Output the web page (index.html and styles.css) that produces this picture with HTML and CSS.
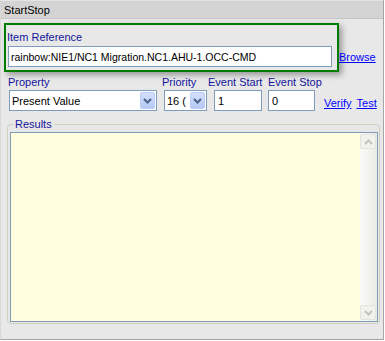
FILE: index.html
```html
<!DOCTYPE html>
<html>
<head lang="en">
    <meta charset="UTF-8">
    <title>StartStop</title>

    <link rel="stylesheet" href="styles.css">
</head>
<body>

<div class="panel">
    <div class="titlebar">StartStop</div>

    <div class="content">
        <div class="ref-row">
            <div class="ref-box">
                <div class="label">Item Reference</div>
                <input class="text ref-input" type="text" value="rainbow:NIE1/NC1 Migration.NC1.AHU-1.OCC-CMD">
            </div>
            <a class="link browse" href="#">Browse</a>
        </div>

        <div class="fields">
            <div class="field f-property">
                <div class="label">Property</div>
                <div class="combo combo-property">
                    <span class="combo-text">Present Value</span>
                    <span class="combo-btn">
                        <svg width="9" height="6" viewBox="0 0 9 6"><path d="M1 1 L4.5 4.5 L8 1" fill="none" stroke="#4d6185" stroke-width="2"/></svg>
                    </span>
                </div>
            </div>
            <div class="field f-priority">
                <div class="label">Priority</div>
                <div class="combo combo-priority">
                    <span class="combo-text">16 (</span>
                    <span class="combo-btn">
                        <svg width="9" height="6" viewBox="0 0 9 6"><path d="M1 1 L4.5 4.5 L8 1" fill="none" stroke="#4d6185" stroke-width="2"/></svg>
                    </span>
                </div>
            </div>
            <div class="field f-start">
                <div class="label">Event Start</div>
                <input class="text small-input" type="text" value="1">
            </div>
            <div class="field f-stop">
                <div class="label">Event Stop</div>
                <input class="text small-input" type="text" value="0">
            </div>
            <div class="links">
                <a class="link" href="#">Verify</a>
                <a class="link" href="#">Test</a>
            </div>
        </div>

        <fieldset class="results">
            <legend>Results</legend>
            <div class="results-area">
                <div class="results-text"></div>
                <div class="scrollbar">
                    <div class="sb-btn">
                        <svg width="9" height="6" viewBox="0 0 9 6"><path d="M1 5 L4.5 1.5 L8 5" fill="none" stroke="#c4c4bc" stroke-width="2"/></svg>
                    </div>
                    <div class="sb-track"></div>
                    <div class="sb-btn">
                        <svg width="9" height="6" viewBox="0 0 9 6"><path d="M1 1 L4.5 4.5 L8 1" fill="none" stroke="#c4c4bc" stroke-width="2"/></svg>
                    </div>
                </div>
            </div>
        </fieldset>
    </div>
</div>

</body>
</html>
```

FILE: styles.css
```css
body, html {
    padding: 0;
    margin: 0;
    background: #ffffff;
}

body {
    font-family: "Liberation Sans", Arial, sans-serif;
    font-size: 11px;
}

.panel {
    width: 384px;
    height: 340px;
    box-sizing: border-box;
    background: #e8e8e8;
    border-right: 1px solid #a6a6a6;
    border-bottom: 1px solid #a6a6a6;
    border-left: 1px solid #d8d8d8;
    display: flex;
    flex-direction: column;
}

.titlebar {
    height: 19px;
    line-height: 19px;
    padding-left: 3px;
    background: #d4d4d4;
    border-top: 1px solid #e4e4e4;
    border-bottom: 1px solid #c6c6c6;
    box-sizing: border-box;
    color: #000;
    font-size: 11px;
}

.content {
    flex: 1;
    display: flex;
    flex-direction: column;
}

.label {
    color: #14149a;
    line-height: 14px;
    height: 14px;
    white-space: nowrap;
}

.link {
    color: #0000ff;
    text-decoration: underline;
}

/* item reference */

.ref-row {
    display: flex;
    align-items: flex-end;
    margin-top: 4px;
    padding-left: 3px;
}

.ref-box {
    width: 335px;
    height: 49px;
    box-sizing: border-box;
    border: 2px solid #007d00;
    box-shadow: 3px 3px 6px rgba(0, 0, 0, 0.35);
    padding: 5px 0 0 1px;
}

.text {
    font-family: "Liberation Sans", Arial, sans-serif;
    font-size: 11px;
    color: #000;
    border: 1px solid #7f9db9;
    background: #fff;
    box-sizing: border-box;
    height: 21px;
    padding: 0 2px;
    margin: 0;
    outline: none;
}

.ref-input {
    margin-top: 2px;
    margin-left: 1px;
    width: 324px;
    font-size: 10.5px;
}

.browse {
    margin-bottom: 9px;
}

/* property row */

.fields {
    display: flex;
    align-items: flex-end;
    margin-top: 3px;
}

.field {
    display: flex;
    flex-direction: column;
    flex: none;
}

.field .label {
    margin-bottom: 1px;
}

.f-property {
    width: 154px;
    margin-left: 7px;
}

.f-property .combo {
    margin-left: 1px;
}

.f-priority {
    width: 46px;
}

.f-priority .combo {
    margin-left: 2px;
}

.f-start {
    width: 60px;
}

.f-start .text {
    margin-left: 6px;
}

.f-stop {
    width: 47px;
}

.small-input {
    width: 48px;
    height: 21px;
    padding-left: 3px;
}

.f-stop .small-input {
    width: 47px;
}

.combo {
    height: 21px;
    box-sizing: border-box;
    border: 1px solid #7f9db9;
    background: #fff;
    display: flex;
    align-items: center;
    overflow: hidden;
}

.combo-property {
    width: 148px;
}

.combo-priority {
    width: 43px;
}

.combo-text {
    flex: 1;
    padding-left: 2px;
    white-space: nowrap;
    overflow: hidden;
}

.combo-btn {
    width: 15px;
    height: 17px;
    margin-right: 1px;
    box-sizing: border-box;
    border: 1px solid #bccdf5;
    border-radius: 2px;
    background: linear-gradient(to bottom, #d4e0fc, #b6c9f6);
    display: flex;
    align-items: center;
    justify-content: center;
}

.links {
    display: flex;
    gap: 5px;
    margin-left: 9px;
    margin-bottom: 2px;
}

/* results */

.results {
    margin: 7px 3px 0 6px;
    padding: 0 1px 1px 2px;
    border: 1px solid #d0d0bf;
    border-radius: 4px;
    min-width: 0;
}

.results legend {
    color: #14149a;
    padding: 0 2px;
    margin-left: 3px;
    line-height: 13px;
}

.results-area {
    height: 190px;
    margin-top: 1px;
    box-sizing: border-box;
    border: 1px solid #7f9db9;
    background: #ffffdf;
    display: flex;
}

.results-text {
    flex: 1;
}

.scrollbar {
    width: 17px;
    display: flex;
    flex-direction: column;
    background: linear-gradient(to right, #fbfbf8, #ebebe6);
    padding: 1px 1px 1px 0;
    box-sizing: border-box;
}

.sb-btn {
    height: 15px;
    box-sizing: border-box;
    border: 1px solid #e4e4dc;
    border-radius: 2px;
    background: #f2f2ec;
    display: flex;
    align-items: center;
    justify-content: center;
}

.sb-track {
    flex: 1;
}
```
